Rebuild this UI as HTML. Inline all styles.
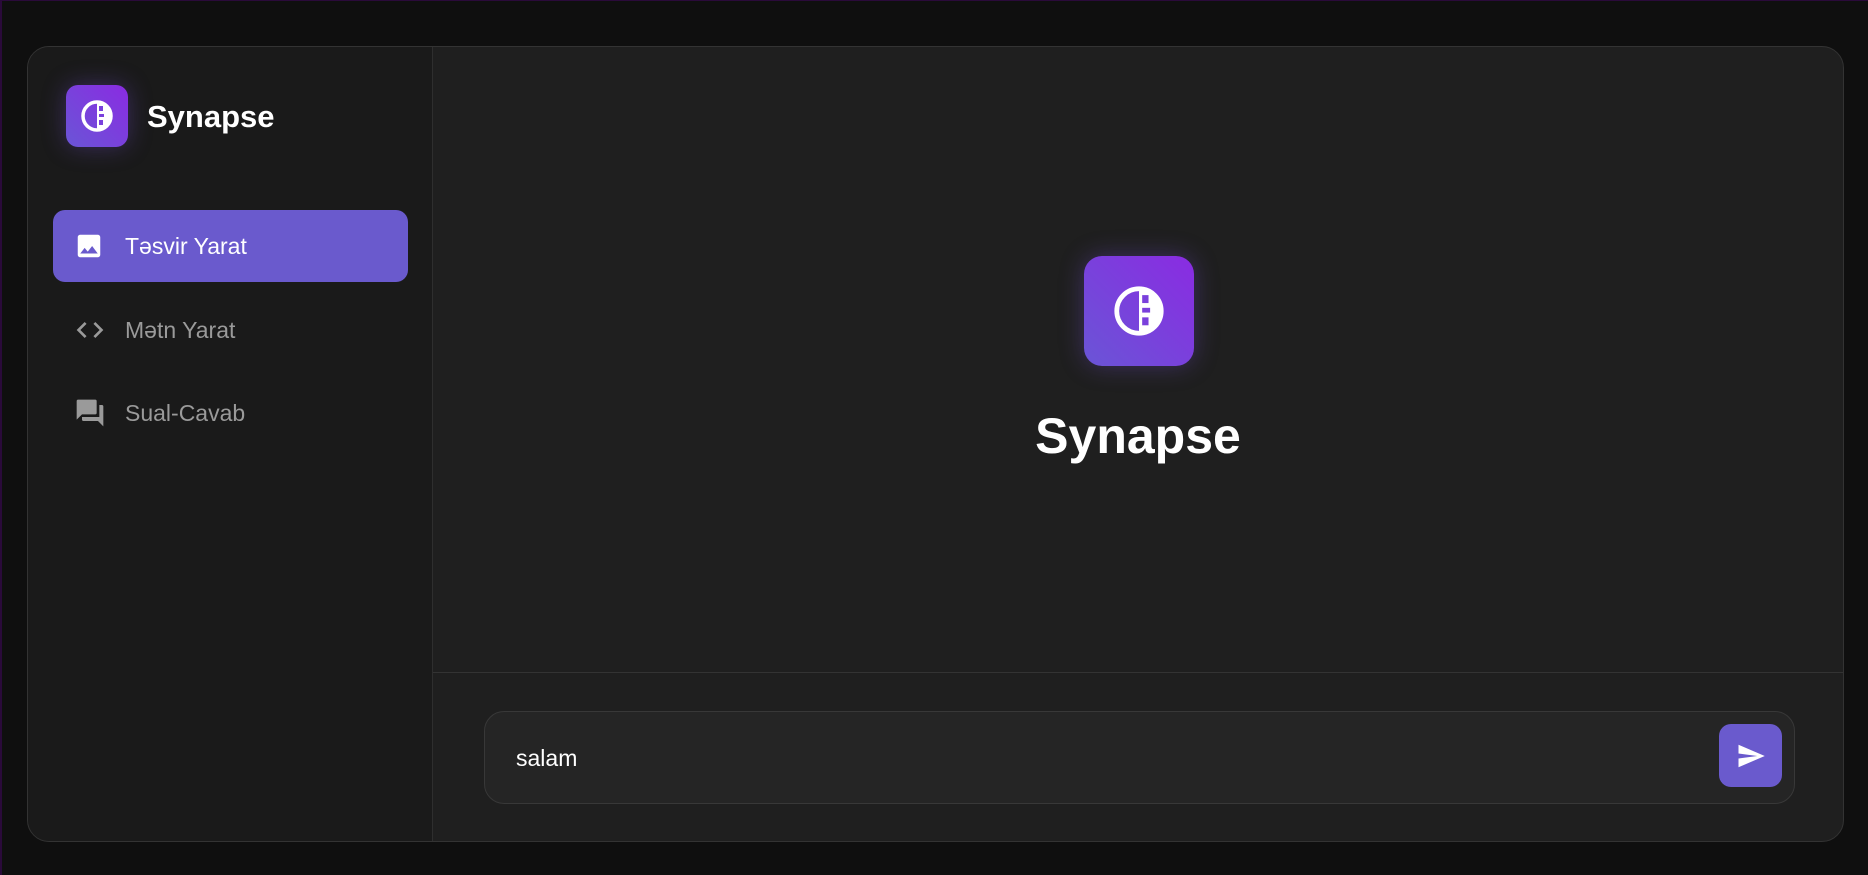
<!DOCTYPE html>
<html><head><style>
*{margin:0;padding:0;box-sizing:border-box}
body{width:1868px;height:875px;background:#0f0f0f;font-family:"Liberation Sans",sans-serif;position:relative;overflow:hidden;box-shadow:inset 2px 1px 0 #2a0a3a}
.app{position:absolute;left:27px;top:46px;width:1817px;height:796px;border:1px solid #333;border-radius:22px;overflow:hidden;background:#1f1f1f}
.side{position:absolute;left:0;top:0;width:405px;height:100%;background:#1a1a1a;border-right:1px solid #2e2e2e}
.logo{position:absolute;width:62px;height:62px;border-radius:12px;background:linear-gradient(45deg,#6a55d6,#8a2be2);box-shadow:0 0 24px rgba(120,80,220,.35);display:flex;align-items:center;justify-content:center}
.brand{position:absolute;left:119px;top:52px;color:#fff;font-weight:bold;font-size:31px}
.nav{position:absolute;left:25px;width:355px;height:72px;border-radius:12px;display:flex;align-items:center;font-size:23px;color:#9a9a9a}
.nav.act{background:#6a5acd;color:#fff}
.nav svg{position:absolute;left:21px}
.nav span{position:absolute;left:97px}
.div{position:absolute;left:405px;right:0;top:625px;border-top:1px solid #333}
.input{position:absolute;left:456px;top:664px;width:1311px;height:93px;border:1px solid #383838;border-radius:20px;background:#252525}
.input span{position:absolute;left:31px;top:33px;color:#fff;font-size:23px}
.send{position:absolute;left:1234px;top:12px;width:63px;height:63px;border-radius:12px;background:#6a5acd;display:flex;align-items:center;justify-content:center}
</style></head><body>
<div class="app">
 <div class="side">
  <div class="logo" style="left:38px;top:38px">
   <svg width="34" height="34" viewBox="0 0 34 34"><circle cx="17" cy="17" r="14" fill="none" stroke="#fff" stroke-width="3.5"/><path d="M17 3a14 14 0 0 1 0 28z" fill="#fff"/><rect x="19" y="7" width="4" height="5" fill="#7a40dc"/><rect x="19" y="15" width="5" height="3" fill="#7a40dc"/><rect x="19" y="21" width="4" height="5" fill="#7a40dc"/></svg>
  </div>
  <div class="brand">Synapse</div>
  <div class="nav act" style="top:163px"><svg width="30" height="30" viewBox="0 0 24 24"><path fill="#fff" d="M21 19V5c0-1.1-.9-2-2-2H5c-1.1 0-2 .9-2 2v14c0 1.1.9 2 2 2h14c1.1 0 2-.9 2-2zM8.5 13.5l2.5 3 3.5-4.5 4.5 6H5l3.5-4.5z"/></svg><span style="left:72px">Təsvir Yarat</span></div>
  <div class="nav" style="top:247px"><svg width="32" height="32" viewBox="0 0 24 24"><path fill="#9a9a9a" d="M9.4 16.6L4.8 12l4.6-4.6L8 6l-6 6 6 6 1.4-1.4zm5.2 0l4.6-4.6-4.6-4.6L16 6l6 6-6 6-1.4-1.4z"/></svg><span style="left:72px">Mətn Yarat</span></div>
  <div class="nav" style="top:330px"><svg width="32" height="32" viewBox="0 0 24 24"><path fill="#9a9a9a" d="M21 6h-2v9H6v2c0 .55.45 1 1 1h11l4 4V7c0-.55-.45-1-1-1zm-4 6V3c0-.55-.45-1-1-1H3c-.55 0-1 .45-1 1v14l4-4h10c.55 0 1-.45 1-1z"/></svg><span style="left:72px">Sual-Cavab</span></div>
 </div>
 <div class="logo" style="left:1056px;top:209px;width:110px;height:110px;border-radius:18px">
  <svg width="54" height="54" viewBox="0 0 34 34"><circle cx="17" cy="17" r="14" fill="none" stroke="#fff" stroke-width="3"/><path d="M17 3a14 14 0 0 1 0 28z" fill="#fff"/><rect x="19" y="7" width="4" height="5" fill="#7a40dc"/><rect x="19" y="15" width="5" height="3" fill="#7a40dc"/><rect x="19" y="21" width="4" height="5" fill="#7a40dc"/></svg>
 </div>
 <div style="position:absolute;left:405px;right:0;top:360px;text-align:center;color:#fff;font-weight:bold;font-size:50px">Synapse</div>
 <div class="div"></div>
 <div class="input"><span>salam</span><div class="send"><svg width="30" height="30" viewBox="0 0 24 24"><path fill="#fff" d="M2 21l21-9L2 3v7l15 2-15 2z"/></svg></div></div>
</div>
</body></html>
